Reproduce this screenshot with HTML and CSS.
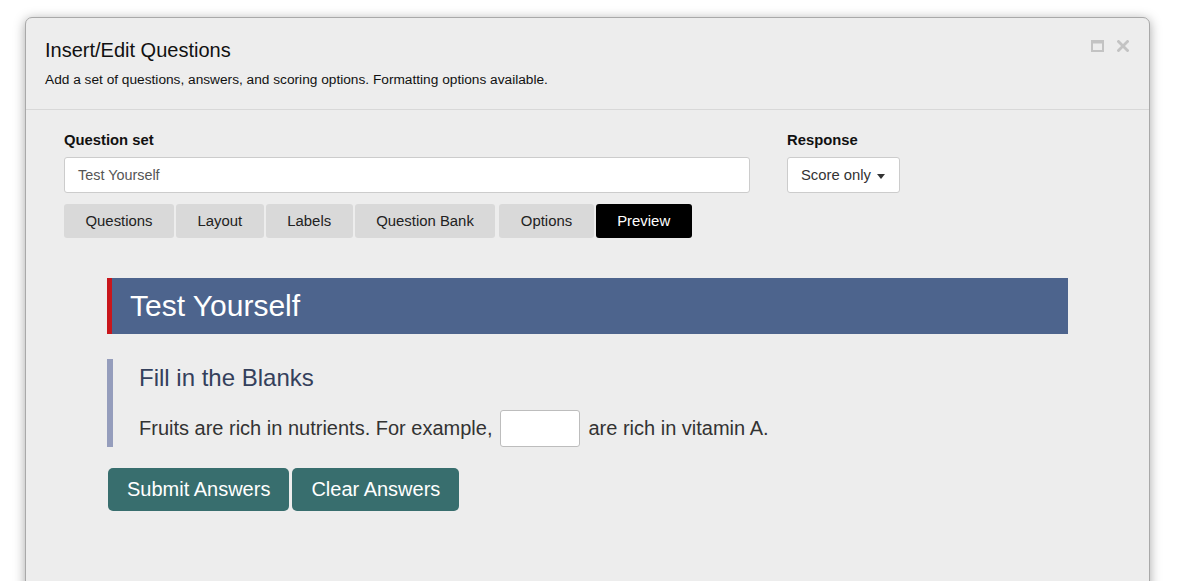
FILE: index.html
```html
<!DOCTYPE html>
<html>
<head>
<meta charset="utf-8">
<link rel="stylesheet" href="styles.css">
</head>
<body>
<div class="dialog">
  <div class="dlg-head">
    <div class="dlg-titles">
      <div class="dlg-title">Insert/Edit Questions</div>
      <div class="dlg-sub">Add a set of questions, answers, and scoring options. Formatting options available.</div>
    </div>
    <div class="dlg-ctrls">
      <svg class="ico" width="13" height="12" viewBox="0 0 13 12"><rect x="1" y="1.5" width="11" height="9.5" fill="none" stroke="#c3c3c3" stroke-width="2"/><rect x="0" y="0" width="13" height="3.5" fill="#c3c3c3"/></svg>
      <svg class="ico" width="12" height="12" viewBox="0 0 12 12"><path d="M1.5 1.5L10.5 10.5M10.5 1.5L1.5 10.5" stroke="#c3c3c3" stroke-width="2.8" stroke-linecap="square"/></svg>
    </div>
  </div>
  <div class="dlg-body">
    <div class="fields">
      <div class="field-set">
        <div class="label">Question set</div>
        <div class="text-input">Test Yourself</div>
      </div>
      <div class="field-resp">
        <div class="label">Response</div>
        <div class="select">Score only <span class="caret"></span></div>
      </div>
    </div>
    <div class="tabs">
      <div class="tab">Questions</div>
      <div class="tab">Layout</div>
      <div class="tab">Labels</div>
      <div class="tab">Question Bank</div>
      <div class="tab tab-gap">Options</div>
      <div class="tab active">Preview</div>
    </div>
    <div class="preview">
      <div class="banner">Test Yourself</div>
      <div class="qblock">
        <div class="qhead">Fill in the Blanks</div>
        <div class="qline">
          <span>Fruits are rich in nutrients. For example,</span>
          <span class="blank"></span>
          <span>are rich in vitamin A.</span>
        </div>
      </div>
      <div class="actions">
        <div class="btn">Submit Answers</div>
        <div class="btn">Clear Answers</div>
      </div>
    </div>
  </div>
</div>
</body>
</html>
```
FILE: styles.css
```css
html, body {
  margin: 0;
  padding: 0;
  background: #ffffff;
  overflow: hidden;
  height: 581px;
}
body {
  padding: 17px 0 0 25px;
  box-sizing: border-box;
  font-family: "Liberation Sans", Arial, sans-serif;
  color: #111;
}
.dialog {
  width: 1125px;
  height: 620px;
  box-sizing: border-box;
  background: #ededed;
  border: 1px solid #a9a9a9;
  border-radius: 7px;
  box-shadow: 0 2px 12px rgba(0,0,0,0.35);
}
.dlg-head {
  display: flex;
  justify-content: space-between;
  align-items: flex-start;
  padding: 20px 20px 21px 19px;
  border-bottom: 1px solid #d8d8d8;
}
.dlg-title {
  font-size: 20px;
  line-height: 24px;
  color: #111;
}
.dlg-sub {
  margin-top: 10px;
  font-size: 13.7px;
  line-height: 16px;
  color: #111;
}
.dlg-ctrls {
  display: flex;
  gap: 13px;
  margin-top: 2px;
}
.ico { display: block; }
.dlg-body {
  padding: 20px 38px 0 38px;
}
.fields {
  display: flex;
  gap: 37px;
}
.field-set { width: 686px; }
.label {
  font-weight: bold;
  font-size: 14.8px;
  line-height: 20px;
  margin-bottom: 7px;
  color: #111;
}
.text-input {
  height: 36px;
  box-sizing: border-box;
  background: #fff;
  border: 1px solid #cccccc;
  border-radius: 3px;
  padding: 0 13px;
  font-size: 14.4px;
  line-height: 35px;
  color: #555;
}
.select {
  width: 113px;
  height: 36px;
  box-sizing: border-box;
  background: #fff;
  border: 1px solid #cccccc;
  border-radius: 3px;
  padding: 0 0 0 13px;
  font-size: 14.8px;
  line-height: 34px;
  color: #333;
  display: flex;
  align-items: center;
  gap: 6px;
}
.caret {
  display: inline-block;
  width: 0;
  height: 0;
  border-left: 4.5px solid transparent;
  border-right: 4.5px solid transparent;
  border-top: 5px solid #333;
  margin-top: 2px;
}
.tabs {
  display: flex;
  gap: 2px;
  margin-top: 11px;
}
.tab {
  height: 34px;
  box-sizing: border-box;
  padding: 0 21.5px;
  background: #d9d9d9;
  border-radius: 3px;
  font-size: 14.9px;
  line-height: 35px;
  color: #222;
}
.tab-gap { margin-left: 2px; }
.tab.active {
  background: #000;
  color: #fff;
}
.preview {
  margin: 40px 43px 0 43px;
}
.banner {
  height: 56px;
  box-sizing: border-box;
  background: #4d648d;
  border-left: 5px solid #c8161c;
  padding-left: 18px;
  font-size: 30px;
  line-height: 56px;
  color: #fff;
}
.qblock {
  margin-top: 25px;
  border-left: 6px solid #959dbc;
  padding: 5px 0 0 26px;
  height: 88px;
  box-sizing: border-box;
}
.qhead {
  font-size: 24px;
  line-height: 28px;
  color: #34405c;
}
.qline {
  margin-top: 18px;
  display: flex;
  align-items: center;
  height: 37px;
  font-size: 20px;
  color: #333;
}
.blank {
  width: 80px;
  height: 37px;
  box-sizing: border-box;
  background: #fff;
  border: 1px solid #bdbdbd;
  border-radius: 3px;
  margin: 0 8px 0 8px;
}
.actions {
  display: flex;
  gap: 3px;
  margin-top: 21px;
  margin-left: 1px;
}
.btn {
  height: 43px;
  box-sizing: border-box;
  padding: 0 19px;
  background: #386e6e;
  border-radius: 5px;
  font-size: 20px;
  line-height: 43px;
  color: #fff;
}
```
